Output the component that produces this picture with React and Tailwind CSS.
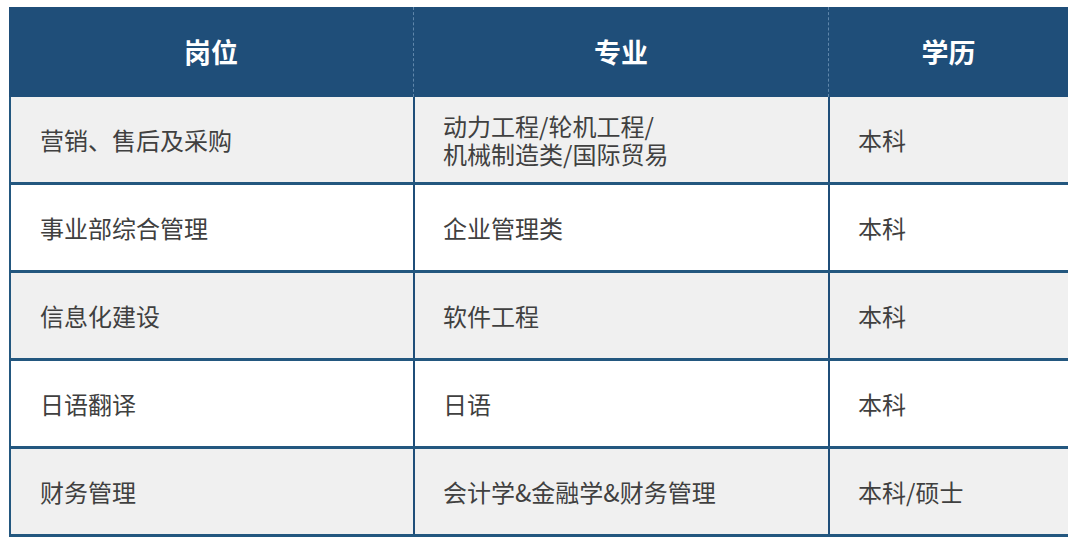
import React from 'react';

const rows = [
  { post: '营销、售后及采购', major: ['动力工程/轮机工程/', '机械制造类/国际贸易'], edu: '本科', bg: 'bg-[#f0f0f0]' },
  { post: '事业部综合管理', major: ['企业管理类'], edu: '本科', bg: 'bg-white' },
  { post: '信息化建设', major: ['软件工程'], edu: '本科', bg: 'bg-[#f0f0f0]' },
  { post: '日语翻译', major: ['日语'], edu: '本科', bg: 'bg-white' },
  { post: '财务管理', major: ['会计学&金融学&财务管理'], edu: '本科/硕士', bg: 'bg-[#f0f0f0]' },
];

const font = { fontFamily: '"Noto Sans CJK SC", "Microsoft YaHei", sans-serif' };

const App = () => {
  return (
    <div className="w-[1080px] h-[549px] bg-white pt-[7px] pl-[9px]" style={font}>
      <div className="w-[1059px]">
        {/* header */}
        <div className="grid grid-cols-[404px_415px_1fr] h-[90px] bg-[#1f4e79] text-white text-[27px] font-bold">
          <div className="flex items-center justify-center">岗位</div>
          <div className="flex items-center justify-center border-l border-dashed border-[#5f86aa]">专业</div>
          <div className="flex items-center justify-center border-l border-dashed border-[#5f86aa]">学历</div>
        </div>

        {rows.map((r, i) => (
          <div
            key={i}
            className={`grid grid-cols-[402px_415px_1fr] h-[88px] ${r.bg} border-l-2 border-b-[3px] border-[#23577f] text-[24px] text-[#404040] leading-[28px]`}
          >
            <div className="flex items-center pl-[29px]">{r.post}</div>
            <div className="flex flex-col justify-center pl-[28px] border-l-2 border-[#1f4e79]">
              {r.major.map((m, j) => (
                <span key={j}>{m}</span>
              ))}
            </div>
            <div className="flex items-center pl-[28px] border-l-2 border-[#1f4e79]">{r.edu}</div>
          </div>
        ))}
      </div>
    </div>
  );
};

export default App;
